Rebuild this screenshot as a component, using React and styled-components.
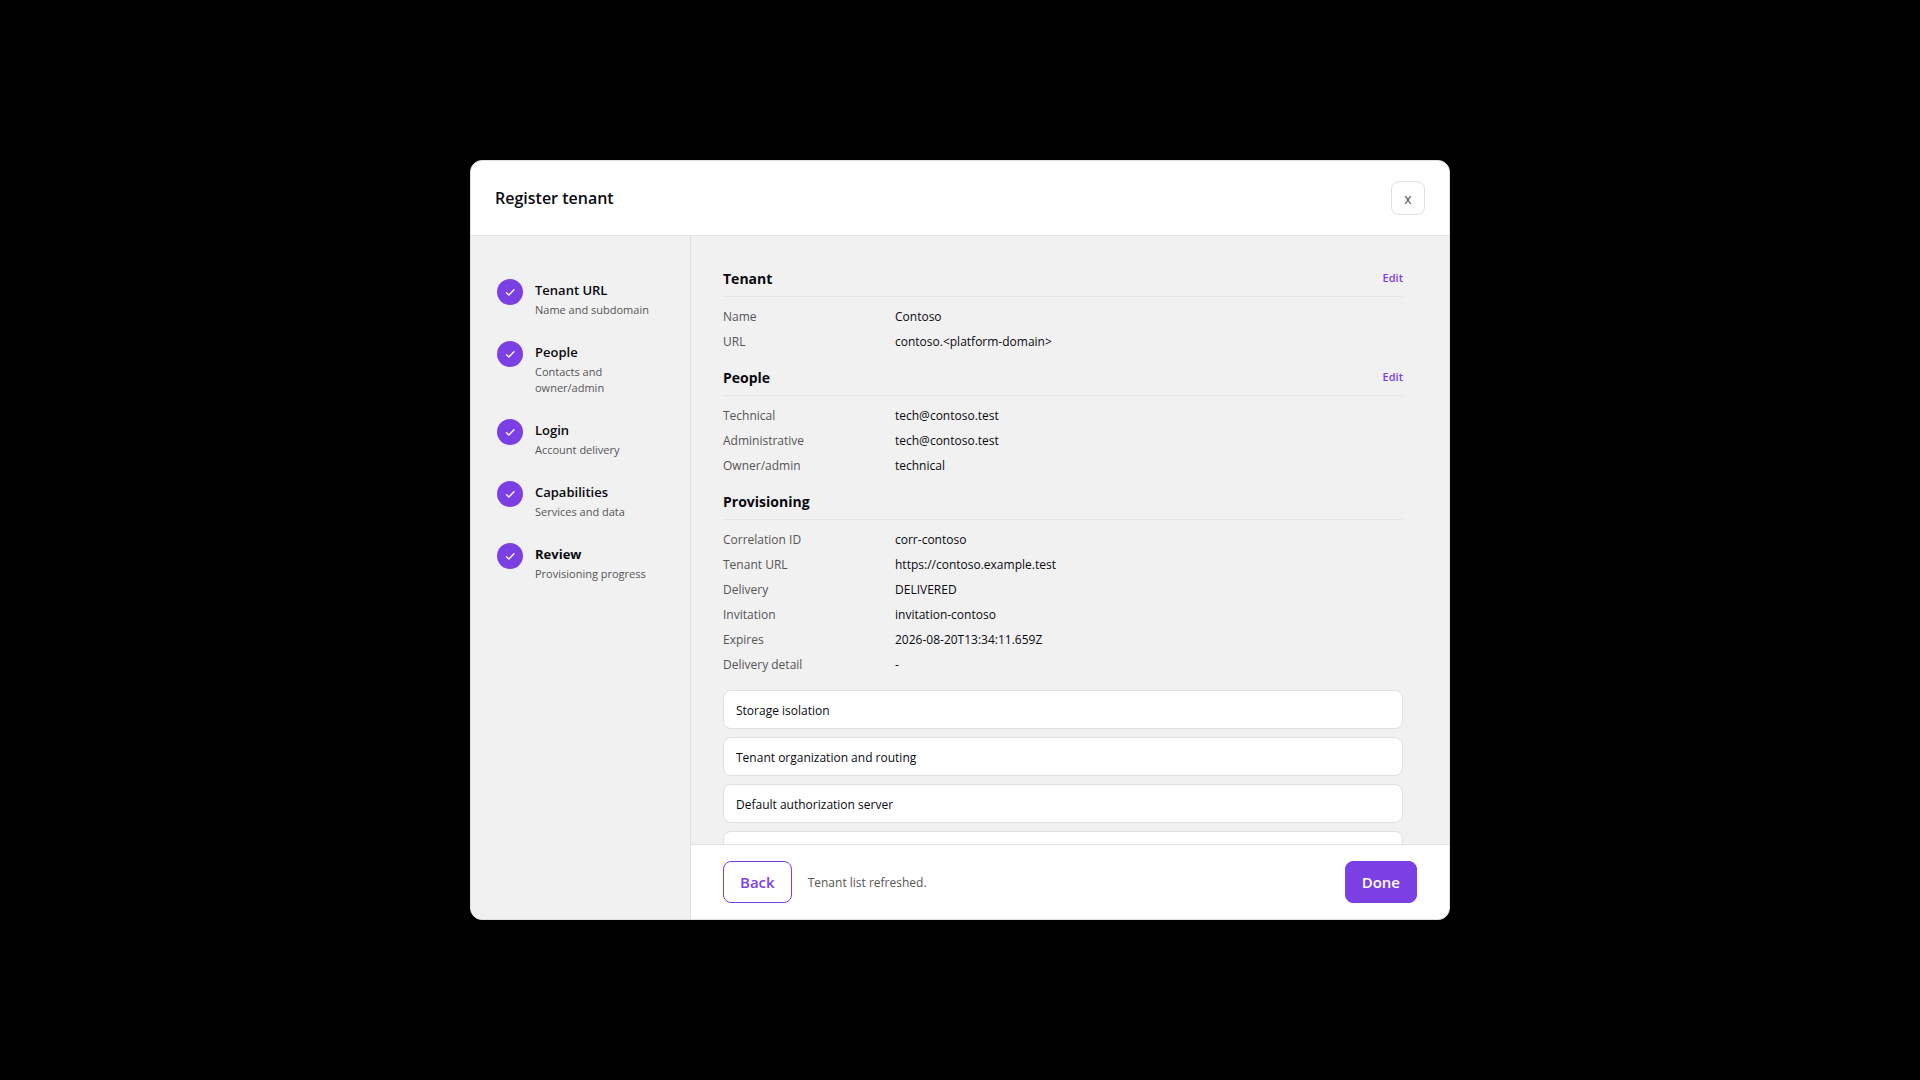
import React from 'react';
import styled, { createGlobalStyle } from 'styled-components';

const color = {
  white: '#ffffff',
  surface: '#f1f1f1',
  border: '#e0e0e0',
  divider: '#e6e6e6',
  text: '#0a0a0f',
  muted: '#555555',
  purple: '#7b3fe4',
};

const STEPS = [
  { title: 'Tenant URL', description: 'Name and subdomain' },
  { title: 'People', description: 'Contacts and owner/admin' },
  { title: 'Login', description: 'Account delivery' },
  { title: 'Capabilities', description: 'Services and data' },
  { title: 'Review', description: 'Provisioning progress', current: true },
];

const SECTIONS = [
  {
    title: 'Tenant',
    editable: true,
    rows: [
      ['Name', 'Contoso'],
      ['URL', 'contoso.<platform-domain>'],
    ],
  },
  {
    title: 'People',
    editable: true,
    rows: [
      ['Technical', 'tech@contoso.test'],
      ['Administrative', 'tech@contoso.test'],
      ['Owner/admin', 'technical'],
    ],
  },
  {
    title: 'Provisioning',
    editable: false,
    rows: [
      ['Correlation ID', 'corr-contoso'],
      ['Tenant URL', 'https://contoso.example.test'],
      ['Delivery', 'DELIVERED'],
      ['Invitation', 'invitation-contoso'],
      ['Expires', '2026-08-20T13:34:11.659Z'],
      ['Delivery detail', '-'],
    ],
  },
];

const TASKS = ['Storage isolation', 'Tenant organization and routing', 'Default authorization server', ''];

function CheckIcon() {
  return (
    <svg width="12" height="12" viewBox="0 0 12 12" fill="none" aria-hidden="true">
      <path
        d="M2.5 6.8L4.9 9L10 3.8"
        stroke="currentColor"
        strokeWidth="1.3"
        strokeLinecap="round"
        strokeLinejoin="round"
      />
    </svg>
  );
}

function App() {
  return (
    <>
      <GlobalStyle />
      <Backdrop>
        <Dialog role="dialog" aria-modal="true" aria-labelledby="dialog-title">
          <Header>
            <Title id="dialog-title">Register tenant</Title>
            <CloseButton type="button" aria-label="Close">
              x
            </CloseButton>
          </Header>
          <Body>
            <Steps>
              {STEPS.map(({ title, description, current }) => (
                <Step key={title} aria-current={current ? 'step' : undefined}>
                  <StepMark>
                    <CheckIcon />
                  </StepMark>
                  <StepText>
                    <StepTitle $current={current}>{title}</StepTitle>
                    <StepDescription>{description}</StepDescription>
                  </StepText>
                </Step>
              ))}
            </Steps>
            <Main>
              <Scroll>
                <Review>
                  {SECTIONS.map(({ title, editable, rows }) => (
                    <Section key={title}>
                      <SectionHead>
                        <SectionTitle>{title}</SectionTitle>
                        {editable && <EditButton type="button">Edit</EditButton>}
                      </SectionHead>
                      <Rows>
                        {rows.map(([label, value]) => (
                          <Row key={label}>
                            <Label>{label}</Label>
                            <Value>{value}</Value>
                          </Row>
                        ))}
                      </Rows>
                    </Section>
                  ))}
                  <Tasks>
                    {TASKS.map((task) => (
                      <Task key={task}>{task}</Task>
                    ))}
                  </Tasks>
                </Review>
              </Scroll>
              <Footer>
                <Button type="button" $variant="outlined">
                  Back
                </Button>
                <Status role="status">Tenant list refreshed.</Status>
                <Button type="button">Done</Button>
              </Footer>
            </Main>
          </Body>
        </Dialog>
      </Backdrop>
    </>
  );
}

export default App;

const GlobalStyle = createGlobalStyle`
  *, *::before, *::after {
    box-sizing: border-box;
  }
  body {
    margin: 0;
    background: #000000;
    color: ${color.text};
    font-family: 'Open Sans', 'Noto Sans', sans-serif;
    font-size: 12px;
  }
  h2, h3, p, ul, ol, dl, dd {
    margin: 0;
    padding: 0;
  }
  button {
    font-family: inherit;
    cursor: pointer;
  }
`;

const Backdrop = styled.div`
  display: flex;
  align-items: center;
  justify-content: center;
  min-height: 100vh;
  padding: 24px;
`;

const Dialog = styled.section`
  display: flex;
  flex-direction: column;
  width: 100%;
  max-width: 980px;
  max-height: min(760px, calc(100vh - 48px));
  overflow: hidden;
  background: ${color.white};
  border: 1px solid ${color.border};
  border-radius: 12px;
`;

const Header = styled.header`
  display: flex;
  align-items: center;
  justify-content: space-between;
  padding: 20px 24px;
  border-bottom: 1px solid ${color.border};
`;

const Title = styled.h2`
  font-size: 16px;
  font-weight: 600;
  line-height: 24px;
`;

const CloseButton = styled.button`
  width: 34px;
  height: 34px;
  padding: 0;
  background: ${color.white};
  border: 1px solid ${color.border};
  border-radius: 8px;
  color: ${color.muted};
  font-size: 14px;
`;

const Body = styled.div`
  display: flex;
  flex: 1;
  min-height: 0;
`;

const Steps = styled.ol`
  display: flex;
  flex-direction: column;
  flex: 0 0 220px;
  gap: 23px;
  padding: 43px 24px 24px 26px;
  background: ${color.surface};
  border-right: 1px solid ${color.border};
  list-style: none;
`;

const Step = styled.li`
  display: flex;
  gap: 12px;
`;

const StepMark = styled.span`
  display: flex;
  align-items: center;
  justify-content: center;
  flex: none;
  width: 26px;
  height: 26px;
  background: ${color.purple};
  border-radius: 50%;
  color: ${color.white};
`;

const StepText = styled.div`
  display: flex;
  flex-direction: column;
  gap: 1px;
`;

const StepTitle = styled.span`
  font-size: 13px;
  font-weight: ${({ $current }) => ($current ? 700 : 600)};
  line-height: 22px;
`;

const StepDescription = styled.span`
  color: ${color.muted};
  font-size: 11px;
  line-height: 16px;
`;

const Main = styled.div`
  display: flex;
  flex: 1;
  flex-direction: column;
  min-width: 0;
`;

const Scroll = styled.div`
  flex: 1;
  min-height: 0;
  padding: 30px 32px;
  overflow-y: auto;
  background: ${color.surface};
  scrollbar-width: none;
`;

const Review = styled.div`
  max-width: 680px;
`;

const Section = styled.section`
  & + & {
    margin-top: 11px;
  }
`;

const SectionHead = styled.div`
  display: flex;
  align-items: flex-start;
  justify-content: space-between;
  padding-bottom: 4px;
  border-bottom: 1px solid ${color.divider};
`;

const SectionTitle = styled.h3`
  font-size: 14px;
  font-weight: 700;
  line-height: 26px;
`;

const EditButton = styled.button`
  padding: 0;
  background: none;
  border: 0;
  color: ${color.purple};
  font-size: 11px;
  font-weight: 600;
  line-height: 24px;
`;

const Rows = styled.dl`
  padding-top: 7px;
`;

const Row = styled.div`
  display: grid;
  grid-template-columns: 160px 1fr;
  gap: 12px;
  line-height: 25px;
`;

const Label = styled.dt`
  color: ${color.muted};
`;

const Value = styled.dd`
  overflow-wrap: anywhere;
`;

const Tasks = styled.ul`
  display: flex;
  flex-direction: column;
  gap: 8px;
  margin-top: 13px;
  list-style: none;
`;

const Task = styled.li`
  min-height: 39px;
  padding: 10px 12px 8px;
  background: ${color.white};
  border: 1px solid ${color.border};
  border-radius: 8px;
  line-height: 19px;
`;

const Footer = styled.footer`
  display: flex;
  align-items: center;
  gap: 16px;
  padding: 16px 32px;
  border-top: 1px solid ${color.border};
`;

const Status = styled.p`
  flex: 1;
  color: ${color.muted};
`;

const Button = styled.button`
  height: 42px;
  padding: 0 16px;
  background: ${({ $variant }) => ($variant === 'outlined' ? color.white : color.purple)};
  border: 1px solid ${color.purple};
  border-radius: 8px;
  color: ${({ $variant }) => ($variant === 'outlined' ? color.purple : color.white)};
  font-size: 15px;
  font-weight: 600;
`;
